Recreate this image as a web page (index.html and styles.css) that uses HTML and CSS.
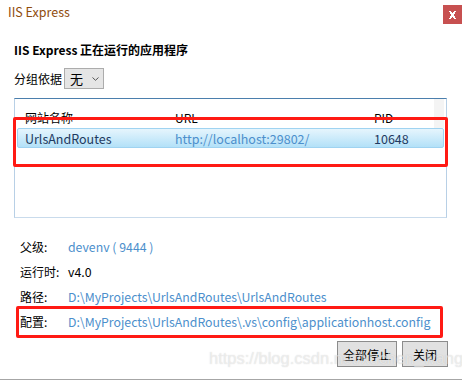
FILE: index.html
```html
<!DOCTYPE html>
<html>
<head>
<meta charset="utf-8">
<link rel="stylesheet" href="styles.css">
</head>
<body>
<div class="window">
  <div class="titlebar">
    <span class="title">IIS Express</span>
    <span class="close"><svg width="9" height="8" viewBox="0 0 9 8"><path d="M1 0h2v1h1v1h1V1h1V0h2v1H7v2H6v2h1v2h1v1H6V7H5V6H4v1H3v1H1V7h1V5h1V3H2V1H1z" fill="#fff"/></svg></span>
  </div>
  <div class="content">
    <h1 class="heading"><span class="latin">IIS Express</span> 正在运行的应用程序</h1>
    <div class="group">
      <span class="group-label">分组依据</span>
      <span class="select">无<svg class="chev" width="7" height="4" viewBox="0 0 7 4"><path d="M0.5 0.5L3.5 3.3L6.5 0.5" fill="none" stroke="#555" stroke-width="1"/></svg></span>
    </div>
    <div class="list">
      <div class="list-head">
        <span class="col c1">网站名称</span>
        <span class="col c2">URL</span>
        <span class="col c3">PID</span>
        <span class="head-pad"></span>
      </div>
      <div class="list-row">
        <span class="col c1 dark">UrlsAndRoutes</span>
        <span class="col c2 link">http://localhost:29802/</span>
        <span class="col c3 dark">10648</span>
      </div>
    </div>
    <div class="info">
      <div class="info-row"><span class="lbl">父级:</span><span class="val link">devenv ( 9444 )</span></div>
      <div class="info-row"><span class="lbl">运行时:</span><span class="val">v4.0</span></div>
      <div class="info-row"><span class="lbl">路径:</span><span class="val link">D:\MyProjects\UrlsAndRoutes\UrlsAndRoutes</span></div>
      <div class="info-row"><span class="lbl">配置:</span><span class="val link">D:\MyProjects\UrlsAndRoutes\.vs\config\applicationhost.config</span></div>
    </div>
    <div class="buttons">
      <span class="btn btn-stop">全部停止</span>
      <span class="btn btn-close">关闭</span>
    </div>
  </div>
  <div class="mark mark1"></div>
  <div class="mark mark2"></div>
  <div class="watermark">https://blog.csdn.net/xuchen_wang</div>
</div>
</body>
</html>
```
FILE: styles.css
```css
html, body {
  margin: 0;
  padding: 0;
  background: #fff;
}
.window {
  position: relative;
  width: 462px;
  height: 380px;
  box-sizing: border-box;
  border-bottom: 1px solid #a6a6a6;
  overflow: hidden;
  font-family: "Noto Sans CJK SC", "Noto Sans", sans-serif;
  font-size: 12px;
  color: #000;
}
.titlebar {
  height: 30px;
  display: flex;
  justify-content: space-between;
  align-items: flex-start;
}
.title {
  padding: 4px 0 0 8px;
  line-height: 16px;
  font-size: 12.5px;
  color: #8f4c0c;
}
.close {
  margin-top: 5px;
  width: 19px;
  height: 19px;
  background: #c75050;
  display: flex;
  align-items: center;
  justify-content: center;
}
.content {
  padding: 0 14px 0 14px;
}
.heading {
  margin: 10px 0 0 0;
  font-size: 12px;
  font-weight: bold;
  line-height: 20px;
}
.group {
  margin-top: 8px;
  display: flex;
  align-items: center;
  height: 21px;
}
.group-label {
  width: 50px;
}
.select {
  box-sizing: border-box;
  width: 40px;
  height: 21px;
  background: #e5e5e5;
  border: 1px solid #acacac;
  display: flex;
  align-items: center;
  padding-left: 5px;
  font-size: 13px;
}
.chev {
  margin-left: 9px;
}
.list {
  margin-top: 9px;
  box-sizing: border-box;
  width: 433px;
  height: 120px;
  border: 1px solid #b8d0e6;
  border-top-color: #4b7fad;
  border-bottom-color: #c9dbec;
  padding: 0 2px;
}
.list-head {
  height: 29px;
  display: flex;
  align-items: flex-end;
  padding-bottom: 2px;
  box-sizing: border-box;
  line-height: 16px;
}
.head-pad {
  margin-left: auto;
  align-self: stretch;
  width: 10px;
  background: #f4f4f4;
  margin-bottom: -2px;
}
.col {
  display: block;
}
.c1 { width: 150px; padding-left: 8px; }
.c2 { width: 199px; }
.c3 { width: 60px; }
.list-row {
  box-sizing: border-box;
  height: 20px;
  display: flex;
  align-items: center;
  border: 1px solid #9fd3f1;
  border-radius: 2px;
  background: linear-gradient(#e6f5fd, #b3e1f8);
  font-size: 12.5px;
}
.list-row .c1 { padding-left: 7px; }
.dark { color: #1f3a60; }
.link { color: #4c8fcc; }
.info {
  margin-top: 16px;
  padding-left: 6px;
}
.info-row {
  display: flex;
  height: 25px;
  align-items: center;
}
.lbl {
  width: 48px;
}
.val {
  font-size: 12.3px;
}
.buttons {
  margin-top: 7px;
  display: flex;
  justify-content: flex-end;
  gap: 5px;
}
.btn {
  box-sizing: border-box;
  height: 26px;
  background: #e1e1e1;
  border: 1px solid #8c8c8c;
  display: flex;
  align-items: center;
  justify-content: center;
}
.btn-stop { width: 60px; }
.btn-close { width: 46px; }
.mark {
  position: absolute;
  border: 3px solid #ff1a14;
  border-radius: 2px;
  box-sizing: border-box;
}
.mark1 {
  left: 13px;
  top: 117px;
  width: 435px;
  height: 50px;
}
.mark2 {
  left: 16px;
  top: 306px;
  width: 427px;
  height: 32px;
}
.watermark {
  position: absolute;
  left: 209px;
  top: 348px;
  white-space: nowrap;
  font-family: "Liberation Sans", Arial, sans-serif;
  font-size: 16.5px;
  line-height: 20px;
  color: rgba(255, 255, 255, 0.55);
  text-shadow: 0 0 1px rgba(120, 120, 120, 0.35);
}
```
